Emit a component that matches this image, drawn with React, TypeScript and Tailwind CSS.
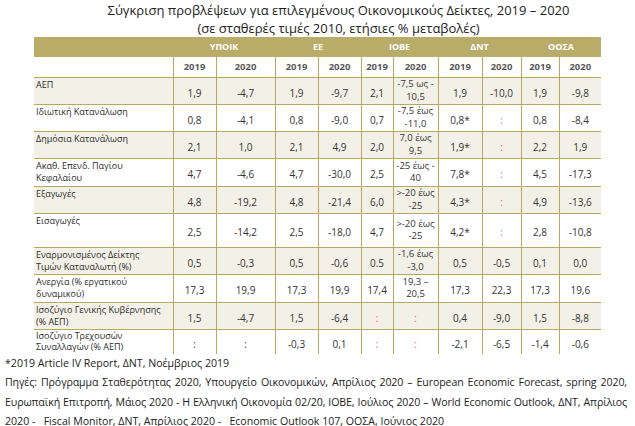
const groups = ["ΥΠΟΙΚ", "ΕΕ", "ΙΟΒΕ", "ΔΝΤ", "ΟΟΣΑ"]
const colWidths = [139, 43, 59, 43, 43, 32, 45, 44, 39, 38, 42]

// ":r" = red colon placeholder
const rows: { label: string; h: number; values: string[] }[] = [
    { label: "ΑΕΠ", h: 27, values: ["1,9", "-4,7", "1,9", "-9,7", "2,1", "-7,5  ως -\n10,5", "1,9", "-10,0", "1,9", "-9,8"] },
    { label: "Ιδιωτική Κατανάλωση", h: 27, values: ["0,8", "-4,1", "0,8", "-9,0", "0,7", "-7,5 έως\n-11,0", "0,8*", ":r", "0,8", "-8,4"] },
    { label: "Δημόσια Κατανάλωση", h: 27, values: ["2,1", "1,0", "2,1", "4,9", "2,0", "7,0 έως\n9,5", "1,9*", ":r", "2,2", "1,9"] },
    { label: "Ακαθ. Επενδ. Παγίου\nΚεφαλαίου", h: 28, values: ["4,7", "-4,6", "4,7", "-30,0", "2,5", "-25 έως -\n40", "7,8*", ":r", "4,5", "-17,3"] },
    { label: "Εξαγωγές", h: 27, values: ["4,8", "-19,2", "4,8", "-21,4", "6,0", ">-20 έως\n-25", "4,3*", ":r", "4,9", "-13,6"] },
    { label: "Εισαγωγές", h: 34, values: ["2,5", "-14,2", "2,5", "-18,0", "4,7", ">-20 έως\n-25", "4,2*", ":r", "2,8", "-10,8"] },
    { label: "Εναρμονισμένος Δείκτης\nΤιμών Καταναλωτή (%)", h: 27, values: ["0,5", "-0,3", "0,5", "-0,6", "0.5", "-1,6 έως\n-3,0", "0,5", "-0,5", "0,1", "0,0"] },
    { label: "Ανεργία (% εργατικού\nδυναμικού)", h: 28, values: ["17,3", "19,9", "17,3", "19,9", "17,4", "19,3 –\n20,5", "17,3", "22,3", "17,3", "19,6"] },
    { label: "Ισοζύγιο Γενικής Κυβέρνησης\n(% ΑΕΠ)", h: 27, values: ["1,5", "-4,7", "1,5", "-6,4", ":r", ":r", "0,4", "-9,0", "1,5", "-8,8"] },
    { label: "Ισοζύγιο Τρεχουσών\nΣυναλλαγών (% ΑΕΠ)", h: 23, values: [":", ":", "-0,3", "0,1", ":r", ":r", "-2,1", "-6,5", "-1,4", "-0,6"] },
]

export default function App() {
    return (
        <div className="w-[635px] h-[426px] bg-white text-[#333333] font-['Open_Sans','Noto_Sans',sans-serif] overflow-hidden">
            <div className="pt-[1px] pl-[42px] text-center text-[13px] leading-[18px] text-[#222]">
                <p>Σύγκριση προβλέψεων για επιλεγμένους Οικονομικούς Δείκτες, 2019 – 2020</p>
                <p>(σε σταθερές τιμές 2010, ετήσιες % μεταβολές)</p>
            </div>

            <table className="ml-[34px] table-fixed border-collapse w-[567px]">
                <colgroup>
                    {colWidths.map((w, i) => <col key={i} style={{ width: w }} />)}
                </colgroup>
                <thead>
                    <tr className="h-[20px] bg-[#b8ac68] text-white text-[9px] font-bold">
                        <th></th>
                        {groups.map(g => <th key={g} colSpan={2} className="font-bold align-middle">{g}</th>)}
                    </tr>
                    <tr className="h-[20px] bg-white text-[9.5px] font-bold text-[#595959] border-b border-[#b5a860]">
                        <th></th>
                        {groups.map(g => (
                            <>
                                <th key={g + "a"} className="border-l border-[#b5a860] font-bold">2019</th>
                                <th key={g + "b"} className="border-l border-[#b5a860] font-bold">2020</th>
                            </>
                        ))}
                    </tr>
                </thead>
                <tbody>
                    {rows.map((r, i) => (
                        <tr key={i} style={{ height: r.h }} className={`border-b border-[#b5a860] last:border-b-0 ${i % 2 === 0 ? "bg-[#f3f1e7]" : "bg-white"}`}>
                            <td className={`align-top pl-[2px] text-[9px] whitespace-pre-line text-[#2b2b2b] ${i === rows.length - 1 ? "pt-0 leading-[11px]" : "pt-[1px] leading-[12.5px]"}`}>{r.label}</td>
                            {r.values.map((v, j) => (
                                <td key={j} className="border-l border-[#b5a860] text-center align-middle p-0">
                                    {v === ":r" ? (
                                        <span className="text-[10px] text-[#f0605a]">:</span>
                                    ) : v.includes("\n") ? (
                                        <span className="block whitespace-pre-line text-[9.5px] leading-[12.5px]">{v}</span>
                                    ) : (
                                        <span className="text-[10px]">{v}</span>
                                    )}
                                </td>
                            ))}
                        </tr>
                    ))}
                </tbody>
            </table>

            <div className="pl-[5px] pr-[8px] text-[10.6px] leading-[19.5px] text-[#222]">
                <p>*2019 Article IV Report, ΔΝΤ, Νοέμβριος 2019</p>
                <p className="whitespace-nowrap tracking-[-0.1px] text-justify [text-align-last:justify]">Πηγές: Πρόγραμμα Σταθερότητας 2020, Υπουργείο Οικονομικών, Απρίλιος 2020 – European Economic Forecast, spring 2020,</p>
                <p className="whitespace-nowrap tracking-[-0.1px] text-justify [text-align-last:justify]">Ευρωπαϊκή Επιτροπή, Μάιος 2020 - Η Ελληνική Οικονομία 02/20, ΙΟΒΕ, Ιούλιος 2020 – World Economic Outlook, ΔΝΤ, Απρίλιος</p>
                <p className="whitespace-pre pt-[3px] leading-[13px]">2020 -   Fiscal Monitor, ΔΝΤ, Απρίλιος 2020 -   Economic Outlook 107, ΟΟΣΑ, Ιούνιος 2020</p>
            </div>
        </div>
    )
}
